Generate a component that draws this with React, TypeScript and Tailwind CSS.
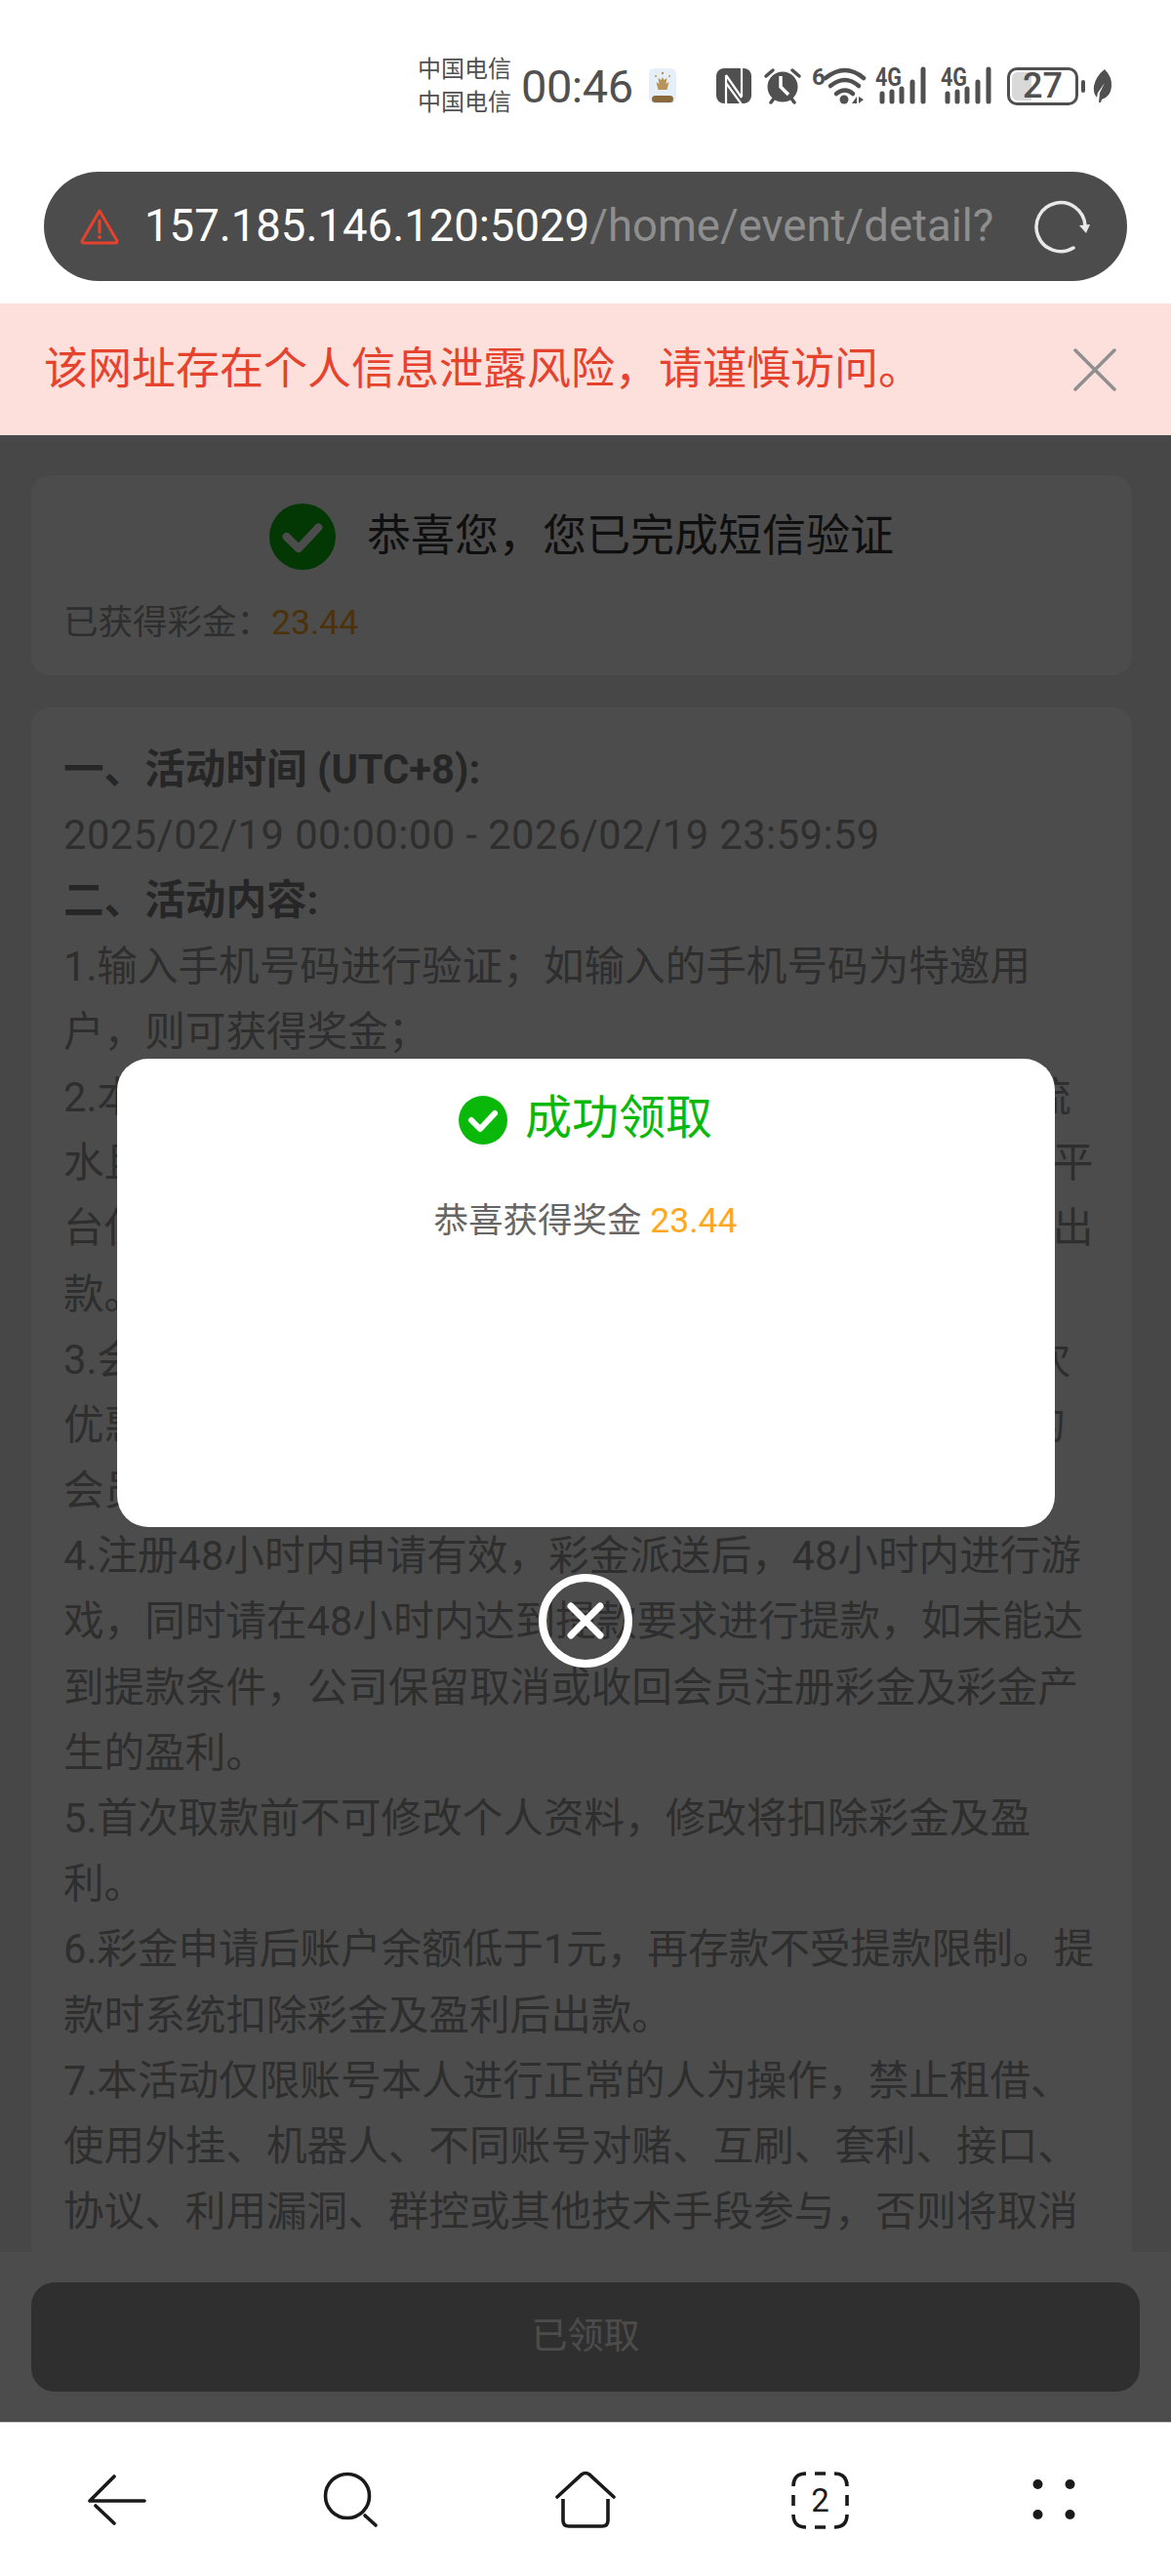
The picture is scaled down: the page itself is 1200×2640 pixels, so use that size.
const bodyLines: [string, string][] = [
  ["一、活动时间 (UTC+8):", "b"],
  ["2025/02/19 00:00:00 - 2026/02/19 23:59:59", "d"],
  ["二、活动内容:", "b"],
  ["1.输入手机号码进行验证；如输入的手机号码为特邀用", "n"],
  ["户，则可获得奖金；", "n"],
  ["2.本活动彩金需完成相应倍数的有效投注流水方可申请流", "n"],
  ["水且完成验证后方可提款，单笔提款上限为100000元，平", "n"],
  ["台仅提供一次申请机会，须完成100000元流水后方可提出", "n"],
  ["款。", "n"],
  ["3.会员每人仅可参与一次，同一设备及同一地址仅限一次", "n"],
  ["优惠，如有重复申请情况，平台有权取消100元及以上的", "n"],
  ["会员资格及优惠", "n"],
  ["4.注册48小时内申请有效，彩金派送后，48小时内进行游", "n"],
  ["戏，同时请在48小时内达到提款要求进行提款，如未能达", "n"],
  ["到提款条件，公司保留取消或收回会员注册彩金及彩金产", "n"],
  ["生的盈利。", "n"],
  ["5.首次取款前不可修改个人资料，修改将扣除彩金及盈", "n"],
  ["利。", "n"],
  ["6.彩金申请后账户余额低于1元，再存款不受提款限制。提", "n"],
  ["款时系统扣除彩金及盈利后出款。", "n"],
  ["7.本活动仅限账号本人进行正常的人为操作，禁止租借、", "n"],
  ["使用外挂、机器人、不同账号对赌、互刷、套利、接口、", "n"],
  ["协议、利用漏洞、群控或其他技术手段参与，否则将取消", "n"],
  ["其参与资格并收回彩金及盈利。", "n"],
];

function Signal() {
  return (
    <svg width="54" height="40" viewBox="0 0 54 40" className="shrink-0">
      <text x="0" y="20" fontSize="25" fontWeight="700" fontFamily="Roboto, sans-serif" fill="#505050" textLength="27" lengthAdjust="spacingAndGlyphs">4G</text>
      <g stroke="#505050" strokeWidth="5" strokeLinecap="round">
        <path d="M7 28V36" />
        <path d="M17 26V36" />
        <path d="M27 23V36" />
        <path d="M38 16V36" />
        <path d="M49 3V36" />
      </g>
    </svg>
  );
}

function StatusBar() {
  return (
    <div className="h-[176px] bg-white flex items-center pl-[428px] text-[#505050]">
      <div className="w-[100px] shrink-0 text-[24px] leading-[34px]">
        <div>中国电信</div>
        <div>中国电信</div>
      </div>
      <div className="ml-[6px] w-[120px] shrink-0 text-[47px] leading-none tracking-[-0.5px]">00:46</div>
      <svg width="28" height="36" viewBox="0 0 28 36" className="ml-[11px] shrink-0">
        <rect x="0" y="0" width="28" height="36" rx="6" fill="#e6eff8" />
        <path d="M14 9l1.5 3 3-2-1 6 3-2-2 8H9.5l-2-8 3 2-1-6 3 2z" fill="#b8935a" />
        <circle cx="14" cy="5" r="1.2" fill="#b8935a" />
        <circle cx="7" cy="8" r="1" fill="#b8935a" />
        <circle cx="21" cy="8" r="1" fill="#b8935a" />
        <rect x="3" y="28" width="22" height="7" rx="3.5" fill="#8a6a3c" />
      </svg>
      <svg width="36" height="36" viewBox="0 0 36 36" className="ml-[41px] shrink-0">
        <rect x="0" y="0" width="36" height="36" rx="8" fill="#505050" />
        <path d="M10 36V7M10 7L26 30M26 0V29M10 15L26 37" fill="none" stroke="#fff" strokeWidth="2.2" />
      </svg>
      <svg width="40" height="38" viewBox="0 0 40 38" className="ml-[12px] shrink-0">
        <path d="M3 9L10 3M37 9L30 3" stroke="#505050" strokeWidth="3.5" strokeLinecap="round" />
        <circle cx="20" cy="20" r="15.5" fill="#505050" />
        <path d="M18 9V20L26 28" stroke="#fff" strokeWidth="3.5" fill="none" />
        <path d="M8 36L11 32M32 36L29 32" stroke="#505050" strokeWidth="3.5" strokeLinecap="round" />
      </svg>
      <svg width="56" height="40" viewBox="0 0 56 40" className="ml-[10px] shrink-0">
        <text x="0" y="19" fontSize="24" fontWeight="700" fontFamily="Roboto, sans-serif" fill="#505050">6</text>
        <g stroke="#505050" strokeWidth="4.5" fill="none" strokeLinecap="round">
          <path d="M14 12Q34 -4 53 12" />
          <path d="M19 20Q34 8 48 20" />
          <path d="M25 28Q34 21 42 28" />
        </g>
        <circle cx="33" cy="34" r="4.5" fill="#505050" />
        <path d="M41 38L46 31V38ZM48 31V38L53 34Z" fill="#505050" />
      </svg>
      <div className="ml-[9px] shrink-0"><Signal /></div>
      <div className="ml-[13px] shrink-0"><Signal /></div>
      <div className="ml-[14px] shrink-0 relative w-[73px] h-[39px] rounded-[10px] border-[3px] border-[#505050] overflow-hidden flex items-center justify-center">
        <div className="absolute left-[2px] top-[2px] bottom-[2px] w-[20px] rounded-l-[6px] bg-[#d9d9d9]" />
        <span className="relative text-[36px] leading-none text-[#505050] font-medium">27</span>
      </div>
      <div className="ml-[3px] w-[4px] h-[13px] rounded-full bg-[#505050] shrink-0" />
      <svg width="20" height="34" viewBox="0 0 20 34" className="ml-[8px] shrink-0">
        <path d="M12 0Q20 8 19 18Q18 28 9 31L8 34H6L7 24L12 14L5 24L4 29Q0 24 1 17Q3 7 12 0Z" fill="#505050" />
      </svg>
    </div>
  );
}

function UrlBar() {
  return (
    <div className="bg-white h-[135px] px-[45px]">
      <div className="h-[112px] rounded-full bg-[#4c4c4c] flex items-center pl-[35px] pr-[38px]">
        <svg width="44" height="38" viewBox="0 0 42 38" className="shrink-0">
          <path d="M21 3L39 34Q39 36 37 36H5Q3 36 3 34Z" fill="none" stroke="#e5432e" strokeWidth="3" strokeLinejoin="round" />
          <path d="M21 13V25" stroke="#e5432e" strokeWidth="3.2" strokeLinecap="round" />
          <circle cx="21" cy="30" r="2" fill="#e5432e" />
        </svg>
        <div className="ml-[24px] w-[872px] shrink-0 overflow-hidden whitespace-nowrap text-[45.5px] leading-none">
          <span className="text-white">157.185.146.120:5029</span>
          <span className="text-[#8e8e8e]">/home/event/detail?id=1024</span>
        </div>
        <svg width="60" height="60" viewBox="0 0 60 60" className="ml-auto shrink-0">
          <path d="M43 52A25 25 0 1 1 55 29" fill="none" stroke="#e8e8e8" strokeWidth="3.5" strokeLinecap="round" />
          <path d="M49 29L56 37L60 28Z" fill="#e8e8e8" />
        </svg>
      </div>
    </div>
  );
}

function Banner() {
  return (
    <div className="h-[135px] bg-[#fde0dc] flex items-center justify-between pl-[45px] pr-[56px]">
      <span className="text-[45px] leading-none text-[#e5432e]">该网址存在个人信息泄露风险，请谨慎访问。</span>
      <svg width="44" height="44" viewBox="0 0 44 44" className="shrink-0">
        <path d="M2 2L42 42M42 2L2 42" stroke="#8f8f8f" strokeWidth="3.5" strokeLinecap="round" />
      </svg>
    </div>
  );
}

function Check({ size, color }: { size: number; color: string }) {
  return (
    <svg width={size} height={size} viewBox="0 0 50 50" className="shrink-0">
      <circle cx="25" cy="25" r="25" fill={color} />
      <path d="M13 25L22 34L37 18" fill="none" stroke="#fff" strokeWidth="6" strokeLinecap="round" strokeLinejoin="round" />
    </svg>
  );
}

function Page() {
  return (
    <div className="relative h-[2036px] bg-[#eeeeee] flex flex-col overflow-hidden">
      <div className="h-[7px] shrink-0 bg-[#f6f6f6]" />
      <div className="flex-1 min-h-0 overflow-hidden pl-[32px] pr-[40px] pt-[34px]">
        <div className="rounded-[20px] bg-white pt-[29px] pb-[29px] pl-[33px]">
          <div className="flex items-center justify-center gap-[32px] pr-[33px]">
            <Check size={68} color="#0ab80a" />
            <span className="text-[45px] leading-[68px] text-[#333333]">恭喜您，您已完成短信验证</span>
          </div>
          <div className="mt-[29px] text-[35.5px] leading-[50px] text-[#999999]">
            已获得彩金：<span className="text-[#ffa81f]">23.44</span>
          </div>
        </div>
        <div className="mt-[33px] rounded-[20px] bg-white pt-[30px] pl-[33px] h-[1700px]">
          {bodyLines.map(([line, kind], i) => (
            <div
              key={i}
              className={
                kind === "b"
                  ? "h-[67.2px] whitespace-nowrap text-[41.6px] leading-[67.2px] font-bold text-[#808080]"
                  : kind === "d"
                    ? "h-[67.2px] whitespace-nowrap text-[41.6px] leading-[67.2px] tracking-[0.5px] text-[#999999]"
                    : "h-[67.2px] whitespace-nowrap text-[41.6px] leading-[67.2px] text-[#999999]"
              }
            >
              {line}
            </div>
          ))}
        </div>
      </div>
      <div className="h-[174px] shrink-0 bg-white pl-[32px] pr-[32px] pt-[31px]">
        <div className="h-[112px] rounded-[24px] bg-[#9d9d9d] flex items-center justify-center text-[37px] text-white">
          已领取
        </div>
      </div>

      <div className="absolute inset-0 bg-black/70 flex flex-col items-center pt-[639px]">
        <div className="w-[961px] h-[480px] rounded-[32px] bg-white flex flex-col items-center pt-[38px]">
          <div className="flex items-center gap-[18px]">
            <Check size={50} color="#0ab80a" />
            <span className="text-[48px] leading-[50px] -translate-y-[2px] text-[#0ab80a]">成功领取</span>
          </div>
          <div className="mt-[53px] text-[35.5px] leading-[50px] text-[#666666]">
            恭喜获得奖金 <span className="text-[#ffa81f]">23.44</span>
          </div>
        </div>
        <div className="mt-[48px] w-[96px] h-[96px] rounded-full border-[8px] border-white flex items-center justify-center">
          <svg width="48" height="48" viewBox="0 0 48 48">
            <path d="M9 9L39 39M39 9L9 39" stroke="#fff" strokeWidth="7" strokeLinecap="round" />
          </svg>
        </div>
      </div>
    </div>
  );
}

function BottomNav() {
  const ink = "#1a1a1a";
  return (
    <div className="h-[158px] bg-white border-t border-[#cccccc] grid grid-cols-5 items-center justify-items-center">
      <svg width="64" height="64" viewBox="0 0 64 64">
        <path d="M29 8L4 33H60M10 38L29 56" fill="none" stroke={ink} strokeWidth="3.6" strokeLinecap="round" strokeLinejoin="round" />
      </svg>
      <svg width="64" height="64" viewBox="0 0 64 64">
        <circle cx="28" cy="28" r="22.5" fill="none" stroke={ink} strokeWidth="3.6" />
        <path d="M46 48L57 58" stroke={ink} strokeWidth="3.6" strokeLinecap="round" />
      </svg>
      <svg width="64" height="64" viewBox="0 0 64 64">
        <path d="M3 29L28 6Q32 3 36 6L61 29" fill="none" stroke={ink} strokeWidth="3.6" strokeLinecap="round" />
        <path d="M9 31V53Q9 59 15 59H49Q55 59 55 53V31" fill="none" stroke={ink} strokeWidth="3.6" />
      </svg>
      <svg width="64" height="64" viewBox="0 0 64 64">
        <path
          d="M5 18Q5 5 18 5M27 5H38M47 5Q60 5 60 18M60 27V38M60 47Q60 60 47 60M38 60H27M18 60Q5 60 5 47M5 38V27"
          fill="none"
          stroke={ink}
          strokeWidth="3.6"
        />
        <text x="32.5" y="44" fontSize="33" textAnchor="middle" fill={ink} fontFamily="Roboto, sans-serif">2</text>
      </svg>
      <svg width="64" height="64" viewBox="0 0 64 64">
        <circle cx="15.5" cy="16" r="5" fill={ink} />
        <circle cx="48.5" cy="16" r="5" fill={ink} />
        <circle cx="15.5" cy="47" r="5" fill={ink} />
        <circle cx="48.5" cy="47" r="5" fill={ink} />
      </svg>
    </div>
  );
}

export default function App() {
  return (
    <div className="w-[1200px] h-[2640px] overflow-hidden bg-white font-[Roboto,'Noto_Sans_CJK_SC',sans-serif]">
      <StatusBar />
      <UrlBar />
      <Banner />
      <Page />
      <BottomNav />
    </div>
  );
}
